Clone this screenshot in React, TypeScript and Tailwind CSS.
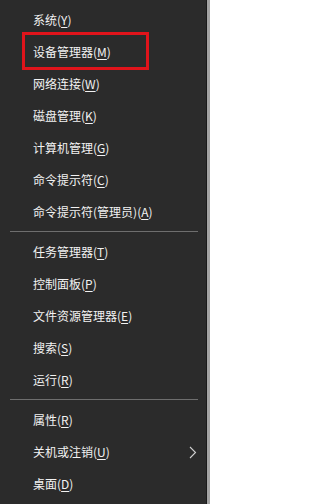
import React from "react"

type Item = { label: string; key: string; suffix?: string; arrow?: boolean }

const groups: Item[][] = [
  [
    { label: "系统", key: "Y" },
    { label: "设备管理器", key: "M" },
    { label: "网络连接", key: "W" },
    { label: "磁盘管理", key: "K" },
    { label: "计算机管理", key: "G" },
    { label: "命令提示符", key: "C" },
    { label: "命令提示符(管理员)", key: "A" },
  ],
  [
    { label: "任务管理器", key: "T" },
    { label: "控制面板", key: "P" },
    { label: "文件资源管理器", key: "E" },
    { label: "搜索", key: "S" },
    { label: "运行", key: "R" },
  ],
  [
    { label: "属性", key: "R" },
    { label: "关机或注销", key: "U", arrow: true },
    { label: "桌面", key: "D" },
  ],
]

function MenuRow({ item }: { item: Item }) {
  return (
    <div className="flex h-8 items-center pl-[33px] pr-[9px] text-[12px] text-[#f2f2f2]">
      <span>
        {item.label}(<span className="underline underline-offset-2">{item.key}</span>)
      </span>
      {item.arrow && (
        <svg className="ml-auto h-[13px] w-[8px]" viewBox="0 0 8 13" fill="none">
          <path d="M1 1l5.5 5.5L1 12" stroke="#d0d0d0" strokeWidth="1.1" />
        </svg>
      )}
    </div>
  )
}

export default function App() {
  return (
    <div
      className="flex h-[504px] w-[210px] overflow-hidden"
      style={{ fontFamily: '"Noto Sans CJK SC", "Noto Sans", sans-serif' }}
    >
      <div className="relative flex-1 bg-[#2b2b2b] pt-1">
        {groups.map((group, gi) => (
          <div key={gi}>
            {gi > 0 && (
              <div className="h-2 pt-[3px] pl-[10px] pr-[8px]">
                <div className="h-px bg-[#6e6e6e]" />
              </div>
            )}
            {group.map((item) => (
              <MenuRow key={item.label} item={item} />
            ))}
          </div>
        ))}
        {/* red highlight around 设备管理器 */}
        <div className="pointer-events-none absolute left-[22px] top-[32px] h-[38px] w-[127px] border-[3px] border-[#e0141b]" />
      </div>
      <div className="w-px bg-[#1a1a1a]" />
      <div className="w-[3px] bg-[#a3a3a3]" />
    </div>
  )
}
